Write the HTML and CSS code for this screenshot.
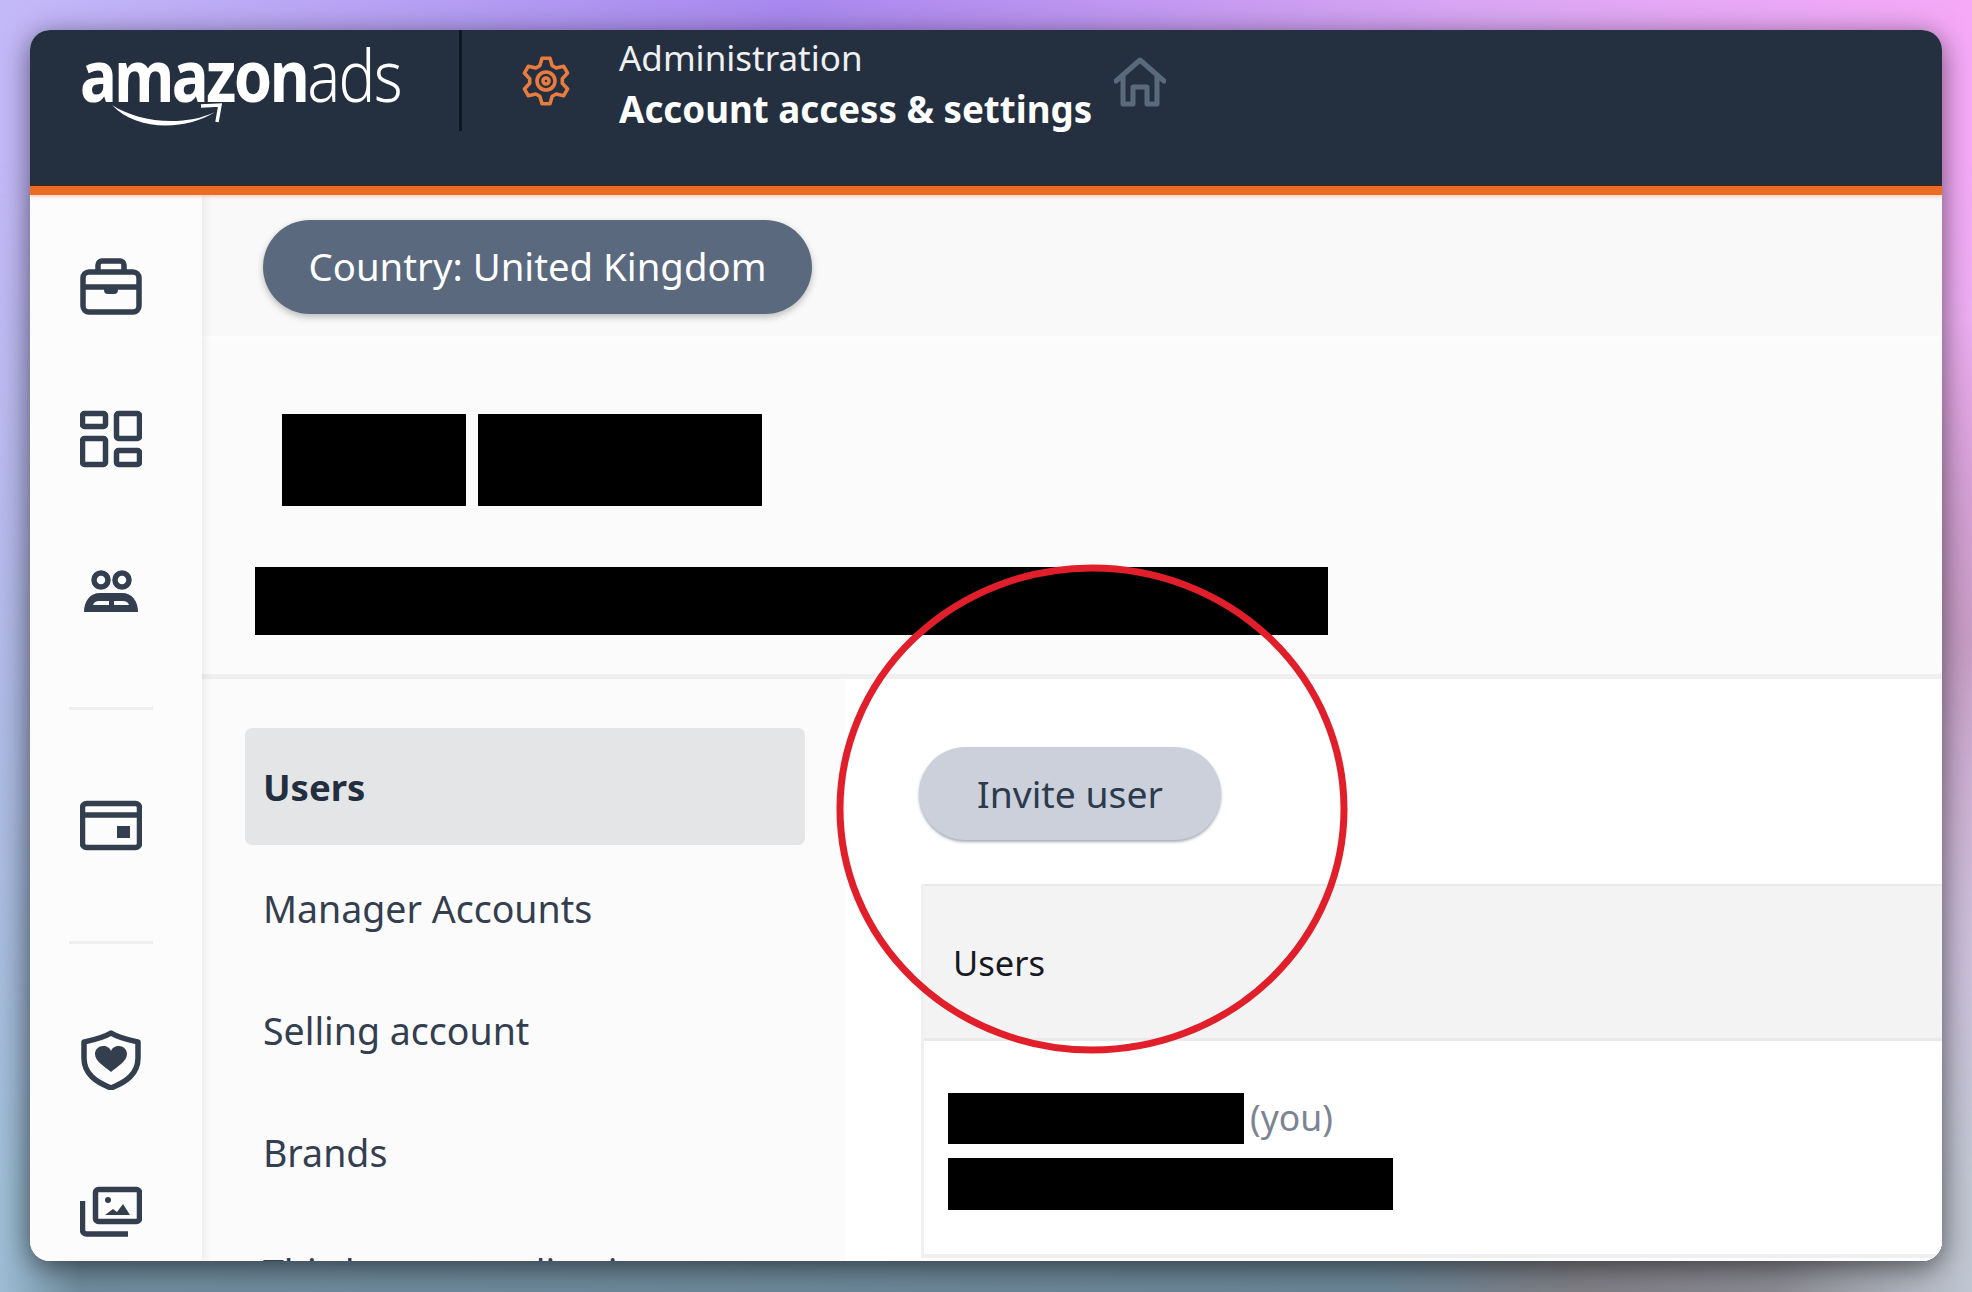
FILE: index.html
```html
<!DOCTYPE html>
<html lang="en">
<head>
<meta charset="utf-8">
<title>Account access &amp; settings</title>
<link rel="stylesheet" href="styles.css">
</head>
<body>
<div class="window">
  <header class="header">
    <div class="logo">
      <div class="logo-text"><span class="logo-amazon">amazon</span><span class="logo-ads">ads</span></div>
      <svg class="logo-smile" viewBox="0 0 116 26" aria-hidden="true"><path class="smile-fill" d="M1 2C25 18 70 25 104 9C76 27 26 29 1 2Z"/><path class="smile-arrow" d="M90 3L109 2L106 19"/></svg>
    </div>
    <div class="head-divider"></div>
    <svg class="gear" viewBox="0 0 50 52" aria-hidden="true"><path d="M18.8 10.7L21 3.3H29L31.2 10.7L35.2 13L42.6 11.2L46.6 18.1L41.3 23.7V28.3L46.6 33.9L42.6 40.8L35.2 39L31.2 41.3L29 48.7H21L18.8 41.3L14.8 39L7.4 40.8L3.4 33.9L8.7 28.3V23.7L3.4 18.1L7.4 11.2L14.8 13Z"/><circle cx="25" cy="26" r="9"/><circle cx="25" cy="26" r="3"/></svg>
    <div class="titles">
      <div class="title-sub">Administration</div>
      <div class="title-main">Account access &amp; settings</div>
    </div>
    <svg class="home" viewBox="0 0 52 50" aria-hidden="true"><path d="M2 24L26 3L50 24M9 19V47H19V30H33V47H43V19"/></svg>
  </header>
  <div class="body">
    <aside class="sidebar">
      <div class="side-item"><svg class="side-icon" viewBox="0 0 62 62" aria-hidden="true"><rect x="3" y="16" width="56" height="40" rx="6"/><path d="M18 16V9a4 4 0 0 1 4-4h18a4 4 0 0 1 4 4v7M3 31H59"/><path class="solid" d="M24 31H38V34a4 4 0 0 1-4 4H28a4 4 0 0 1-4-4Z"/></svg></div>
      <div class="side-item"><svg class="side-icon" viewBox="0 0 62 62" aria-hidden="true"><rect x="2.5" y="5.5" width="23" height="13" rx="2"/><rect x="36.500" y="5.500" width="23" height="25" rx="2"/><rect x="2.500" y="30.500" width="23" height="26" rx="2"/><rect x="36.500" y="42.500" width="23" height="14" rx="2"/></svg></div>
      <div class="side-item"><svg class="side-icon" viewBox="0 0 62 62" aria-hidden="true"><circle cx="21" cy="20" r="7"/><circle cx="42" cy="20" r="7"/><path class="solid" d="M4 52C4 41 10 33 20 33H42C52 33 58 41 58 52Z"/><path class="slit" d="M13 45C14 42 16 41 19 41H29V45ZM34 41H43C46 41 48 42 49 45H34Z"/></svg></div>
      <div class="side-sep"></div>
      <div class="side-item"><svg class="side-icon" viewBox="0 0 62 62" aria-hidden="true"><rect x="2.500" y="9.500" width="57" height="44" rx="4"/><path d="M3 21H59"/><rect class="solid" x="37" y="32" width="13" height="12"/></svg></div>
      <div class="side-sep"></div>
      <div class="side-item"><svg class="side-icon" viewBox="0 0 62 62" aria-hidden="true"><path d="M31 5C39 10 49 12 58 14V30C58 46 46 54 31 60C16 54 4 46 4 30V14C13 12 23 10 31 5Z"/><path class="solid" d="M31 44C24 38 15 33 15 26C15 21 19 18 23 18C27 18 30 20 31 23C32 20 35 18 39 18C43 18 47 21 47 26C47 33 38 38 31 44Z"/></svg></div>
      <div class="side-item"><svg class="side-icon" viewBox="0 0 62 62" aria-hidden="true"><rect x="15.500" y="9.500" width="44" height="32" rx="3"/><path d="M2.500 21V50a4 4 0 0 0 4 4H48"/><circle class="solid" cx="28" cy="20" r="3"/><path class="solid" d="M25 35L33 29L37 32L43 24L50 35Z"/></svg></div>
    </aside>
    <main class="main">
      <section class="country-bar">
        <div class="country-pill">Country: United Kingdom</div>
      </section>
      <section class="details">
        <div class="details-row">
          <div class="redact redact-a"></div>
          <div class="redact redact-b"></div>
        </div>
        <div class="redact redact-c"></div>
      </section>
      <section class="lower">
        <nav class="nav">
          <div class="nav-item nav-active">Users</div>
          <div class="nav-item">Manager Accounts</div>
          <div class="nav-item">Selling account</div>
          <div class="nav-item">Brands</div>
          <div class="nav-item">Third-party applications</div>
        </nav>
        <div class="content">
          <div class="invite">Invite user</div>
          <div class="table">
            <div class="table-head">Users</div>
            <div class="table-row">
              <div class="user-line"><div class="redact redact-d"></div><span class="you">(you)</span></div>
              <div class="redact redact-e"></div>
            </div>
          </div>
        </div>
      </section>
    </main>
  </div>
  <svg class="circle" viewBox="0 0 520 496" aria-hidden="true"><ellipse cx="260" cy="248" rx="252" ry="241"/></svg>
</div>
</body>
</html>
```
FILE: styles.css
```css
* { box-sizing: border-box; }
html, body { margin: 0; height: 100%; }
body {
  position: relative;
  height: 1292px;
  padding: 30px;
  overflow: hidden;
  font-family: "Noto Sans", sans-serif;
  background:
    radial-gradient(170px 330px at 100% 50%, #cd78ba 0%, rgba(205, 120, 186, 0) 100%),
    linear-gradient(90deg, #c4b9f8 0%, #a888ee 40%, #d9a6f3 75%, #f5a9f7 100%);
}
body::before {
  content: "";
  position: absolute;
  inset: 0;
  background: linear-gradient(90deg, #9ebdd4 0%, #6f8c9e 4%, #6a8596 70%, #807f86 80%, #8a8a92 90%, #c0c7d2 100%);
  -webkit-mask-image: linear-gradient(180deg, transparent 12%, #000 92%);
  mask-image: linear-gradient(180deg, transparent 12%, #000 92%);
}
.window {
  position: relative;
  z-index: 1;
  width: 1912px;
  height: 1231px;
  display: flex;
  flex-direction: column;
  border-radius: 20px;
  overflow: hidden;
  background: #fff;
  box-shadow: 0 6px 28px rgba(0, 0, 0, 0.55);
}

.header {
  flex: none;
  height: 165px;
  display: flex;
  align-items: flex-start;
  background: #24303f;
  border-bottom: 9px solid #ea6c25;
  box-shadow: inset 0 -2px 0 #3d2a24, 0 2px 3px rgba(234, 108, 37, 0.25);
  color: #fff;
  z-index: 2;
}
.logo { width: 429px; padding-left: 50px; position: relative; }
.logo-text { font-size: 72px; line-height: 86px; margin-top: 1px; white-space: nowrap; transform: scaleX(0.855); transform-origin: 0 0; }
.logo-amazon { font-weight: 700; letter-spacing: -3px; }
.logo-ads { font-weight: 300; letter-spacing: -2px; }
.logo-smile { position: absolute; left: 81px; top: 73px; width: 116px; height: 26px; }
.smile-fill { fill: #fff; }
.smile-arrow { fill: none; stroke: #fff; stroke-width: 3.5; }
.head-divider { width: 3px; height: 101px; background: #0e1622; }
.gear { width: 50px; height: 52px; margin: 25px 0 0 59px; fill: none; stroke: #e87b3e; stroke-width: 3.600; stroke-linejoin: round; }
.titles { margin-left: 48px; }
.title-sub { font-size: 35px; line-height: 40px; margin-top: 8px; color: #eef0f2; }
.title-main { font-size: 36.700px; line-height: 40px; margin-top: 11px; font-weight: 700; white-space: nowrap; }
.home { width: 52px; height: 50px; margin: 27px 0 0 22px; fill: none; stroke: #5a6a7d; stroke-width: 5; stroke-linejoin: round; stroke-linecap: round; }

.body { flex: 1; min-height: 0; display: flex; }
.sidebar {
  position: relative;
  flex: none;
  width: 172px;
  padding: 16px 10px 0 0;
  background: #fcfcfd;
  box-shadow: 3px 0 8px rgba(0, 0, 0, 0.07);
  z-index: 1;
}
.side-item { height: 152px; display: flex; align-items: center; justify-content: center; }
.side-icon { width: 62px; height: 62px; fill: none; stroke: #333e4f; stroke-width: 5.500; stroke-linejoin: round; }
.side-icon .solid { fill: #333e4f; stroke: none; }
.side-icon .slit { fill: #fcfcfd; stroke: none; }
.side-sep { height: 3px; margin: 40px 39px 39px; background: #eceef0; }

.main { flex: 1; min-width: 0; display: flex; flex-direction: column; background: #fff; }
.country-bar {
  flex: none;
  height: 146px;
  padding: 25px 0 0 61px;
  background: #f9f9f9;
  border-bottom: 5px solid #fdfdfd;
}
.country-pill {
  width: 549px;
  height: 94px;
  padding-bottom: 2px;
  border-radius: 47px;
  display: flex;
  align-items: center;
  justify-content: center;
  background: #5a697d;
  color: #fff;
  font-size: 38.300px;
  box-shadow: 0 3px 7px rgba(0, 0, 0, 0.25);
}
.details {
  flex: none;
  height: 338px;
  padding: 73px 0 0 53px;
  background: #fbfbfb;
  border-bottom: 5px solid #efefef;
}
.details-row { display: flex; gap: 12px; margin-left: 27px; margin-bottom: 61px; }
.redact { background: #000; }
.redact-a { width: 184px; height: 92px; }
.redact-b { width: 284px; height: 92px; }
.redact-c { width: 1073px; height: 68px; }
.lower { flex: 1; min-height: 0; display: flex; }
.nav { flex: none; width: 643px; padding: 49px 40px 0 43px; background: #fbfbfb; }
.nav-item {
  height: 117px;
  margin-bottom: 5px;
  padding-left: 18px;
  display: flex;
  align-items: center;
  border-radius: 7px;
  font-size: 37.500px;
  color: #333e4f;
  white-space: nowrap;
}
.nav-item:last-child { margin-top: -2px; }
.nav-active { background: #e4e5e7; color: #232f3e; font-weight: 700; font-size: 36.500px; }
.content { flex: 1; min-width: 0; padding: 68px 0 0 74px; background: #fff; }
.invite {
  width: 302px;
  height: 93px;
  padding-bottom: 1px;
  border-radius: 47px;
  display: flex;
  align-items: center;
  justify-content: center;
  background: #cbd0db;
  color: #2c3a4d;
  font-size: 37.300px;
  box-shadow: 0 2px 3px rgba(60, 70, 90, 0.45);
}
.table { margin: 44px 0 0 2px; border-left: 3px solid #f0f0f0; border-bottom: 4px solid #efefef; }
.table-head {
  height: 157px;
  padding-left: 29px;
  display: flex;
  align-items: center;
  background: #f3f3f3;
  border-top: 2px solid #e9e9e9;
  border-bottom: 3px solid #e9e9e9;
  color: #16191f;
  font-size: 34.500px;
}
.table-row { padding: 52px 0 44px 24px; display: flex; flex-direction: column; gap: 14px; background: #fff; }
.user-line { display: flex; align-items: center; gap: 6px; }
.redact-d { width: 296px; height: 51px; }
.redact-e { width: 445px; height: 52px; }
.you { font-size: 35.500px; color: #7a8494; margin-top: -4px; }
.circle { position: absolute; left: 802px; top: 531px; width: 520px; height: 496px; fill: none; stroke: #e01f2b; stroke-width: 7; z-index: 3; }
```
